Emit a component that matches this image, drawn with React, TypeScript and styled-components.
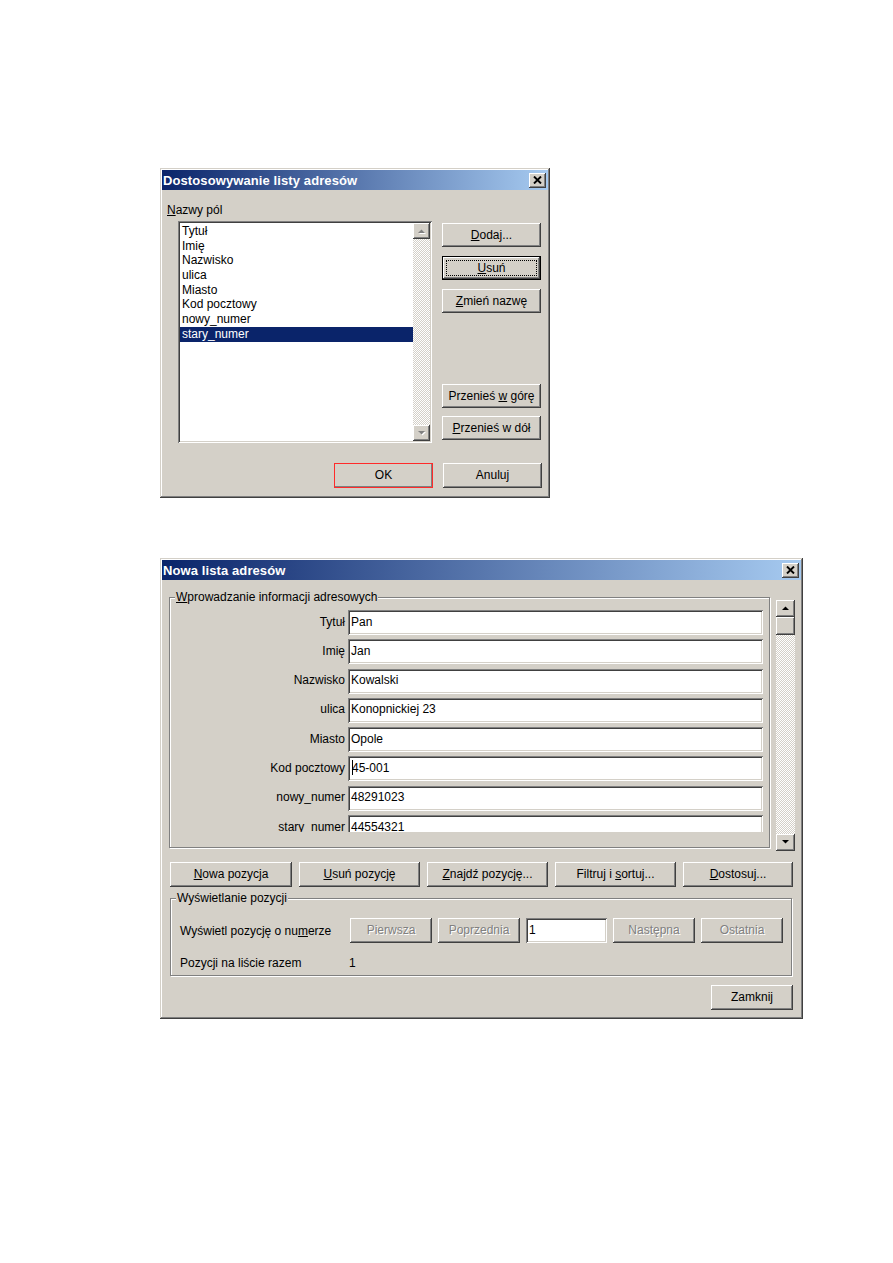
import React from 'react';
import styled, { createGlobalStyle, css } from 'styled-components';

const face = '#d4d0c8';

const GlobalStyle = createGlobalStyle`
  html, body { margin: 0; padding: 0; background: #ffffff; }
  body {
    font-family: "Liberation Sans", Arial, sans-serif;
    font-size: 12px;
    color: #000000;
  }
`;

const raised = css`
  box-shadow:
    inset -1px -1px 0 #404040,
    inset 1px 1px 0 #ffffff,
    inset -2px -2px 0 #808080,
    inset 2px 2px 0 ${face};
`;

const sunken = css`
  box-shadow:
    inset 1px 1px 0 #808080,
    inset -1px -1px 0 #ffffff,
    inset 2px 2px 0 #404040,
    inset -2px -2px 0 ${face};
`;

const dither = css`
  background-color: #ffffff;
  background-image: repeating-conic-gradient(${face} 0% 25%, #ffffff 0% 50%);
  background-size: 2px 2px;
`;

const Page = styled.div`
  width: 893px;
  min-height: 1263px;
  box-sizing: border-box;
  padding: 168px 0 0 160px;
  display: flex;
  flex-direction: column;
  align-items: flex-start;
  gap: 60px;
`;

const Window = styled.section<{ $w: number; $h: number }>`
  width: ${p => p.$w}px;
  height: ${p => p.$h}px;
  box-sizing: border-box;
  padding: 2px;
  background: ${face};
  box-shadow:
    inset -1px -1px 0 #404040,
    inset 1px 1px 0 ${face},
    inset -2px -2px 0 #808080,
    inset 2px 2px 0 #ffffff;
  display: flex;
  flex-direction: column;
`;

const TitleBar = styled.header`
  height: 20px;
  flex: none;
  display: flex;
  align-items: center;
  justify-content: space-between;
  padding: 0 2px 0 1px;
  background: linear-gradient(to right, #0a246a, #a6caf0);
  color: #ffffff;
  font-weight: bold;
  font-size: 13px;
  letter-spacing: 0.1px;
`;

const CloseBox = styled.div`
  width: 17px;
  height: 15px;
  display: flex;
  align-items: center;
  justify-content: center;
  background: ${face};
  ${raised}
`;

const U = styled.span`
  text-decoration: underline;
  text-underline-offset: 1px;
`;

const Btn = styled.div<{ $w?: number; $h?: number; $focus?: boolean; $mark?: boolean; $off?: boolean }>`
  position: relative;
  width: ${p => p.$w ?? 99}px;
  height: ${p => p.$h ?? 24}px;
  flex: none;
  box-sizing: border-box;
  display: flex;
  align-items: center;
  justify-content: center;
  padding-bottom: 1px;
  background: ${face};
  white-space: nowrap;
  ${raised}
  ${p => p.$focus && css`
    box-shadow:
      inset 0 0 0 1px #000000,
      inset -2px -2px 0 #404040,
      inset 2px 2px 0 #ffffff,
      inset -3px -3px 0 #808080;
    &::after {
      content: '';
      position: absolute;
      inset: 4px;
      border: 1px dotted #000000;
    }
  `}
  ${p => p.$mark && css`
    outline: 1px solid #ff2a2a;
    outline-offset: -1px;
  `}
  ${p => p.$off && css`
    color: #808080;
    text-shadow: 1px 1px 0 #ffffff;
  `}
`;

/* ---------- list box (dialog 1) ---------- */

const Body1 = styled.div`
  flex: 1;
  display: flex;
  flex-direction: column;
  padding: 13px 6px 0 5px;
`;

const FieldCaption = styled.div`
  height: 14px;
  line-height: 14px;
  margin-bottom: 4px;
`;

const ListRow = styled.div`
  display: flex;
  margin-left: 11px;
  gap: 10px;
`;

const ListBox = styled.div`
  width: 254px;
  height: 222px;
  box-sizing: border-box;
  padding: 2px;
  background: #ffffff;
  display: flex;
  ${sunken}
`;

const Items = styled.div`
  flex: 1;
  padding-top: 1px;
`;

const Item = styled.div<{ $sel?: boolean }>`
  height: 14.7px;
  line-height: 14.7px;
  padding-left: 2px;
  white-space: nowrap;
  ${p => p.$sel && css`
    background: #0a246a;
    color: #ffffff;
  `}
`;

const VScroll = styled.div<{ $w: number }>`
  width: ${p => p.$w}px;
  flex: none;
  display: flex;
  flex-direction: column;
  ${dither}
`;

const ScrollBtn = styled.div<{ $h: number }>`
  height: ${p => p.$h}px;
  flex: none;
  display: flex;
  align-items: center;
  justify-content: center;
  background: ${face};
  ${raised}
`;

const Track = styled.div`
  flex: 1;
`;

const SideCol = styled.div`
  height: 222px;
  display: flex;
  flex-direction: column;
  padding-top: 2px;
  box-sizing: border-box;
  gap: 9px;
`;

const LowerPair = styled.div`
  margin-top: auto;
  margin-bottom: 3px;
  display: flex;
  flex-direction: column;
  gap: 8px;
`;

const Footer1 = styled.div`
  display: flex;
  justify-content: flex-end;
  gap: 10px;
  margin-top: 20px;
`;

/* ---------- dialog 2 ---------- */

const Body2 = styled.div`
  flex: 1;
  display: flex;
  flex-direction: column;
  padding: 17px 6px 0 7px;
`;

const TopPart = styled.div`
  display: flex;
  align-items: flex-start;
  gap: 6px;
`;

const Group = styled.div<{ $w: number; $h: number }>`
  position: relative;
  width: ${p => p.$w}px;
  height: ${p => p.$h}px;
  box-sizing: border-box;
  border: 1px solid #808080;
  box-shadow: inset 1px 1px 0 #ffffff, 1px 1px 0 #ffffff;
  flex: none;
`;

const GroupLabel = styled.span`
  position: absolute;
  top: -8px;
  left: 5px;
  padding: 0 1px;
  line-height: 14px;
  background: ${face};
`;

const Viewport = styled.div`
  height: 234px;
  overflow: hidden;
  box-sizing: border-box;
  padding-top: 12px;
`;

const FormGrid = styled.div`
  display: grid;
  grid-template-columns: 175px 415px;
  column-gap: 3px;
  row-gap: 4.3px;
  grid-auto-rows: 25px;
`;

const RowLabel = styled.div`
  display: flex;
  align-items: center;
  justify-content: flex-end;
  padding-bottom: 2px;
  white-space: nowrap;
`;

const Field = styled.div<{ $w?: number }>`
  ${p => p.$w && css`width: ${p.$w}px; flex: none;`}
  height: 25px;
  box-sizing: border-box;
  background: #ffffff;
  display: flex;
  align-items: center;
  padding: 0 3px 2px 3px;
  white-space: nowrap;
  ${sunken}
`;

const Caret = styled.span`
  display: inline-block;
  width: 1px;
  height: 15px;
  background: #000000;
  margin-right: -1px;
  margin-left: 1px;
`;

const BtnRow = styled.div`
  display: flex;
  gap: 7px;
  margin: 11px 0 0 1px;
`;

const NavGroupBody = styled.div`
  padding: 19px 0 0 9px;
`;

const NavRow = styled.div`
  display: flex;
  align-items: center;
  gap: 6px;
`;

const NavLabel = styled.div`
  width: 164px;
  flex: none;
  white-space: nowrap;
`;

const CountRow = styled.div`
  display: flex;
  margin-top: 13px;
  line-height: 14px;
`;

const CountLabel = styled.div`
  width: 169px;
  flex: none;
`;

const Footer2 = styled.div`
  display: flex;
  justify-content: flex-end;
  margin: 9px 2px 0 0;
`;

/* ---------- glyphs ---------- */

const CloseX = () => (
  <svg width="9" height="8" viewBox="0 0 9 8">
    <path d="M1 0.5 L8 7.5 M8 0.5 L1 7.5" stroke="#000" strokeWidth="1.9" />
  </svg>
);

const Arrow = ({ down, off }: { down?: boolean; off?: boolean }) => {
  const pts = down ? '0,0 7,0 3.5,3.6' : '0,4 7,4 3.5,0.4';
  return (
    <svg width="8" height="5" viewBox="0 0 8 5">
      {off && <polygon points={pts} fill="#ffffff" transform="translate(1 1)" />}
      <polygon points={pts} fill={off ? '#808080' : '#000000'} />
    </svg>
  );
};

const fieldNames = ['Tytuł', 'Imię', 'Nazwisko', 'ulica', 'Miasto', 'Kod pocztowy', 'nowy_numer', 'stary_numer'];

const values: Record<string, string> = {
  'Tytuł': 'Pan',
  'Imię': 'Jan',
  'Nazwisko': 'Kowalski',
  'ulica': 'Konopnickiej 23',
  'Miasto': 'Opole',
  'Kod pocztowy': '45-001',
  'nowy_numer': '48291023',
  'stary_numer': '44554321',
};

function CustomizeDialog() {
  return (
    <Window $w={390} $h={330}>
      <TitleBar>
        <span>Dostosowywanie listy adresów</span>
        <CloseBox><CloseX /></CloseBox>
      </TitleBar>
      <Body1>
        <FieldCaption><U>N</U>azwy pól</FieldCaption>
        <ListRow>
          <ListBox>
            <Items>
              {fieldNames.map(n => (
                <Item key={n} $sel={n === 'stary_numer'}>{n}</Item>
              ))}
            </Items>
            <VScroll $w={17}>
              <ScrollBtn $h={16}><Arrow off /></ScrollBtn>
              <Track />
              <ScrollBtn $h={16}><Arrow down off /></ScrollBtn>
            </VScroll>
          </ListBox>
          <SideCol>
            <Btn><U>D</U>odaj...</Btn>
            <Btn $focus><U>U</U>suń</Btn>
            <Btn><U>Z</U>mień nazwę</Btn>
            <LowerPair>
              <Btn>Przenieś&nbsp;<U>w</U>&nbsp;górę</Btn>
              <Btn><U>P</U>rzenieś w dół</Btn>
            </LowerPair>
          </SideCol>
        </ListRow>
        <Footer1>
          <Btn $h={25} $mark>OK</Btn>
          <Btn $h={25}>Anuluj</Btn>
        </Footer1>
      </Body1>
    </Window>
  );
}

function AddressListDialog() {
  return (
    <Window $w={643} $h={461}>
      <TitleBar>
        <span>Nowa lista adresów</span>
        <CloseBox><CloseX /></CloseBox>
      </TitleBar>
      <Body2>
        <TopPart>
          <Group $w={601} $h={251}>
            <GroupLabel><U>W</U>prowadzanie informacji adresowych</GroupLabel>
            <Viewport>
              <FormGrid>
                {fieldNames.map(n => (
                  <React.Fragment key={n}>
                    <RowLabel>{n}</RowLabel>
                    <Field>
                      {n === 'Kod pocztowy' && <Caret />}
                      {values[n]}
                    </Field>
                  </React.Fragment>
                ))}
              </FormGrid>
            </Viewport>
          </Group>
          <VScroll $w={19} style={{ height: 251, marginTop: 3 }}>
            <ScrollBtn $h={17}><Arrow /></ScrollBtn>
            <ScrollBtn $h={18} />
            <Track />
            <ScrollBtn $h={17}><Arrow down /></ScrollBtn>
          </VScroll>
        </TopPart>
        <BtnRow>
          <Btn $w={122} $h={25}><U>N</U>owa pozycja</Btn>
          <Btn $w={121} $h={25}><U>U</U>suń pozycję</Btn>
          <Btn $w={121} $h={25}><U>Z</U>najdź pozycję...</Btn>
          <Btn $w={121} $h={25}>Filtruj i&nbsp;<U>s</U>ortuj...</Btn>
          <Btn $w={110} $h={25}><U>D</U>ostosuj...</Btn>
        </BtnRow>
        <Group $w={622} $h={78} style={{ marginTop: 11, marginLeft: 1 }}>
          <GroupLabel>Wyświetlanie pozycji</GroupLabel>
          <NavGroupBody>
            <NavRow>
              <NavLabel>Wyświetl pozycję o nu<U>m</U>erze</NavLabel>
              <Btn $w={82} $h={25} $off>Pierwsza</Btn>
              <Btn $w={82} $h={25} $off>Poprzednia</Btn>
              <Field $w={81}>1</Field>
              <Btn $w={82} $h={25} $off>Następna</Btn>
              <Btn $w={82} $h={25} $off>Ostatnia</Btn>
            </NavRow>
            <CountRow>
              <CountLabel>Pozycji na liście razem</CountLabel>
              <span>1</span>
            </CountRow>
          </NavGroupBody>
        </Group>
        <Footer2>
          <Btn $w={82} $h={25}>Zamknij</Btn>
        </Footer2>
      </Body2>
    </Window>
  );
}

export default function App() {
  return (
    <>
      <GlobalStyle />
      <Page>
        <CustomizeDialog />
        <AddressListDialog />
      </Page>
    </>
  );
}
